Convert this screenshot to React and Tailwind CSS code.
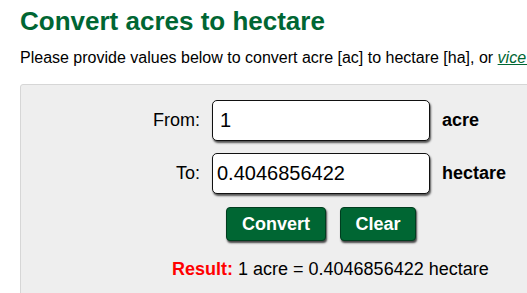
import React, { useState } from 'react';

function App() {
  const [from, setFrom] = useState('1');
  const [to, setTo] = useState('0.4046856422');

  return (
    <div className="w-[527px] h-[293px] overflow-hidden bg-white pl-[20px] font-['Liberation_Sans',Arial,sans-serif] text-black">
      {/* Title */}
      <h1 className="mt-[6px] text-[26px] leading-[30px] font-bold text-[#006633] whitespace-nowrap">
        Convert acres to hectare
      </h1>
      <p className="mt-[12px] text-[16px] leading-[20px] whitespace-nowrap text-[#000]">
        Please provide values below to convert acre [ac] to hectare [ha], or{' '}
        <a href="#" className="italic underline text-[#006633]">vice versa</a>.
      </p>

      {/* Converter panel */}
      <div className="mt-[16px] w-[640px] bg-[#eeeeee] border border-[#d6d6d6] rounded-[3px] pt-[15px] pb-[20px]">
        <div className="grid grid-cols-[179px_218px_auto] gap-x-[12px] gap-y-[12px] items-center">
          <div className="text-right text-[18px] leading-[41px]">From:</div>
          <input
            value={from}
            onChange={(e) => setFrom(e.target.value)}
            className="h-[41px] w-[218px] bg-white border border-[#111] rounded-[5px] px-[7px] text-[20px] shadow-[1px_2px_2px_#555] outline-none"
          />
          <div className="text-[18px] font-bold">acre</div>

          <div className="text-right text-[18px] leading-[41px]">To:</div>
          <input
            value={to}
            onChange={(e) => setTo(e.target.value)}
            className="h-[41px] w-[218px] bg-white border border-[#111] rounded-[5px] px-[4px] text-[20px] shadow-[1px_2px_2px_#555] outline-none"
          />
          <div className="text-[18px] font-bold">hectare</div>

          <div />
          <div className="flex justify-center gap-[14px] mt-[1px]">
            <button className="h-[34px] w-[100px] bg-[#006633] text-white text-[18px] font-bold rounded-[4px] border border-[#003d1f] shadow-[1px_2px_2px_#444]">
              Convert
            </button>
            <button className="h-[34px] w-[76px] bg-[#006633] text-white text-[18px] font-bold rounded-[4px] border border-[#003d1f] shadow-[1px_2px_2px_#444]">
              Clear
            </button>
          </div>
          <div />
        </div>

        <div className="mt-[17px] ml-[151px] text-[18px] leading-[22px] whitespace-nowrap">
          <span className="font-bold text-[#ff0000]">Result:</span> 1 acre = 0.4046856422 hectare
        </div>
      </div>
    </div>
  );
}

export default App;
